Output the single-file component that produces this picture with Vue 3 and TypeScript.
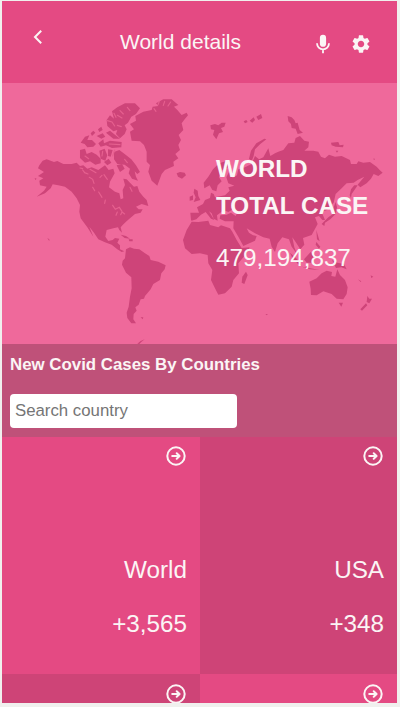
<script setup lang="ts">
import { ref, computed } from 'vue'

interface Country {
  id: number
  name?: string
  cases?: number
}

interface Sheet {
  origin: string
  shapes: string[]
}

const worldTotal = 479194837
const query = ref('')

// Entries without a name are tiles whose figures are not loaded yet.
const countries = ref<Country[]>([
  { id: 1, name: 'World', cases: 3565 },
  { id: 2, name: 'USA', cases: 348 },
  { id: 3 },
  { id: 4 },
])

const visible = computed(() =>
  countries.value.filter((c) =>
    (c.name ?? '').toLowerCase().includes(query.value.toLowerCase()),
  ),
)

const format = (n: number): string => n.toLocaleString('en-US')

// Land outlines, grouped by the corner each set is measured from.
const sheets: Sheet[] = [
  {
    origin: 'translate(30 90) scale(0.3333)',
    shapes: [
      // North America
      'M28 226L38 212 50 208 72 216 82 213 100 222 125 222 140 218 150 228 160 226 172 236 185 232 205 240 225 226 236 240 250 236 254 250 240 275 237 292 255 305 268 310 272 328 280 325 278 300 285 285 280 266 290 268 300 278 312 290 322 288 328 305 340 320 350 330 355 348 335 342 318 350 326 358 338 358 332 368 315 372 300 385 288 395 278 405 272 412 276 428 268 420 264 412 250 415 230 420 226 440 235 453 248 450 255 444 268 446 262 458 270 466 270 478 283 484 275 486 262 478 245 464 225 457 205 448 192 428 178 410 186 430 190 440 172 412 152 385 148 365 150 345 140 325 125 305 105 290 85 286 68 283 62 295 45 310 20 320 42 302 50 290 30 286 28 272 40 265 24 258 42 246 24 235Z',
      // Greenland
      'M300 125L312 118 300 102 318 92 316 78 340 65 365 60 368 50 385 48 378 40 400 28 425 28 445 45 432 50 442 60 455 75 470 68 474 76 464 88 455 100 460 120 446 135 453 150 445 165 450 180 436 192 445 205 430 215 432 228 405 240 395 252 382 287 365 272 355 245 360 225 350 215 350 185 342 165 330 154 305 152Z',
      // Ellesmere and the Arctic archipelago
      'M246 64L262 52 285 40 315 40 330 55 318 72 304 80 294 98 284 106 290 118 284 132 270 145 258 132 262 120 250 124 232 108 230 90 240 76 252 86Z',
      'M150 180L165 176 170 192 185 186 200 194 212 206 212 220 196 224 180 214 165 218 150 204Z',
      'M152 158L165 140 178 136 172 150 186 150 198 162 190 170 172 172 164 162Z',
      'M205 160L220 148 222 160 240 152 275 156 274 172 246 174 228 166 212 170Z',
      'M182 130L190 122 196 128 186 138ZM204 118L214 110 218 120 208 126ZM200 138L218 130 226 140 214 146ZM228 128L240 122 252 132 270 146 250 146Z',
      'M208 182L224 176 232 196 226 212 212 206ZM234 178L248 180 242 200 234 198ZM222 216L236 206 244 218 232 226Z',
      'M252 186L268 180 284 192 304 208 318 226 330 246 322 252 314 244 318 260 324 272 306 266 296 250 300 236 284 224 262 222 252 208Z',
      'M260 226L276 222 284 236 270 246Z',
      // Iceland, Caribbean
      'M440 250L450 246 464 248 468 256 456 266 444 260Z',
      'M272 434L288 438 300 446 284 444ZM296 448L308 448 308 454 298 454ZM14 264L20 266 16 270ZM52 444L58 448 58 454Z',
    ],
  },
  {
    origin: 'translate(30 210) scale(0.3333)',
    shapes: [
      // South America
      'M288 118L300 112 312 116 328 118 345 130 358 138 362 150 385 155 407 166 404 178 394 190 390 210 370 222 362 238 352 250 345 258 342 266 332 268 326 284 316 292 320 302 311 312 310 328 318 340 304 340 292 324 290 308 296 290 300 260 305 235 304 202 288 188 276 164 278 152 285 145Z',
      'M332 322L340 322 338 328ZM322 401L332 393 344 388 334 396 328 402Z',
    ],
  },
  {
    origin: 'translate(175 120) scale(0.3333)',
    shapes: [
      // Africa and Madagascar
      'M50 305L70 306 100 302 105 315 130 322 138 316 165 325 172 335 185 360 200 384 224 382 215 400 190 430 192 460 175 480 170 500 150 520 130 524 120 505 108 480 112 450 100 430 98 405 75 400 50 402 30 385 24 360 35 330Z',
      'M213 455L218 465 208 492 200 488 202 470Z',
      // Eurasia
      'M48 300L46 278 72 278 66 262 84 252 90 240 105 234 108 218 116 222 120 232 150 226 164 212 160 202 178 197 160 190 154 172 165 150 178 160 172 174 186 166 190 148 210 142 230 132 240 108 252 118 265 112 280 85 286 108 300 100 310 95 325 90 340 70 358 68 362 54 375 48 388 62 402 65 400 82 388 92 415 92 430 95 438 110 450 115 462 104 480 110 500 108 525 120 528 132 545 132 550 124 565 128 585 126 605 140 614 150 623 158 610 168 596 162 588 176 575 190 556 202 548 194 558 182 568 170 548 180 536 188 515 190 500 205 482 222 476 248 456 270 440 276 450 300 442 300 432 288 420 292 428 312 410 345 384 354 388 374 376 388 362 366 352 352 358 382 366 402 350 380 342 358 322 352 308 370 300 396 290 380 284 356 265 352 240 340 215 325 222 338 234 346 245 348 240 362 205 378 190 350 175 325 176 304 150 304 134 296 136 286 155 284 168 278 182 288 186 280 174 268 160 276 145 270 136 278 126 286 128 302 116 296 110 280 102 274 118 300 108 296 92 276 78 284 64 298 50 302Z',
      // Scandinavia, Britain, Svalbard, Novaya Zemlya
      'M88 205L86 188 100 170 114 148 132 130 152 124 168 132 160 142 142 150 132 172 140 184 128 196 124 214 112 210 104 196Z',
      'M58 206L68 212 70 228 76 240 56 246 62 232 56 218ZM44 230L54 226 54 240 44 242Z',
      'M106 16L120 12 130 16 140 8 152 8 148 20 138 24 144 36 132 40 124 58 114 44 118 30 108 28Z',
      'M222 116L228 92 244 70 268 56 274 58 256 72 240 88 236 108 230 124Z',
      'M206 4L214 0 218 6 210 10ZM224 2L236 -8 240 0 232 8ZM244 -10L258 -18 262 -6 250 0Z',
      'M338 -12L350 -8 358 0 362 10 368 8 374 30 384 38 368 42 362 26 350 24 348 12 340 4Z',
      'M468 68L490 66 494 76 506 74 504 82 482 80 470 76ZM482 92L490 92 486 98ZM594 116L600 116 598 120Z',
      // Sakhalin, Kamchatka, Japan, Philippines
      'M548 196L540 208 530 222 528 234 524 226 528 208 538 196Z',
      'M482 246L486 262 482 282 466 298 450 308 448 318 440 312 460 292 474 282 476 262Z',
      'M424 330L430 350 434 364 426 358ZM424 366L436 380 432 386 422 374Z',
    ],
  },
  {
    origin: 'translate(200 210) scale(0.3333)',
    shapes: [
      // Australia, Tasmania, New Zealand, Indonesia
      'M328 215L350 205 365 190 380 182 396 186 394 198 406 200 412 178 420 195 435 210 443 232 440 252 430 268 410 266 395 252 370 244 350 256 333 255 332 236Z',
      'M416 278L429 278 424 290Z',
      'M502 258L508 266 516 266 508 280 500 276ZM498 280L502 286 486 302 481 298Z',
      'M396 150L412 158 432 162 440 178 424 172 408 174ZM312 148L332 126 340 136 334 158 320 158ZM270 128L290 146 304 166 294 162 276 142ZM306 170L340 176 358 180 330 178Z',
      'M474 208L484 214 482 216ZM512 196L520 200 514 204ZM196 312L203 312 201 316Z',
    ],
  },
]

// Lakes, straits and bays that cut into the land.
const waters: string[] = [
  'M158 240L164 248 174 252M178 262L188 268 192 280M188 292L194 302M206 306L216 322M248 346L256 358 268 352 276 364M262 366L258 376M272 374L276 366 284 372M180 238L198 248M222 254L232 268M150 234L158 236M300 292L306 304M216 256L210 262M226 330L224 340',
  'M254 180L248 198M232 92L246 96 254 108M270 62L280 72M262 76L276 84M252 70L258 82M274 110L262 106M292 52L300 62M388 34L384 44M404 34L400 46M422 36L414 48M372 56L378 64M218 184L216 198M165 198L176 206M238 162L270 164M284 208L292 218',
]
</script>

<template>
  <main class="phone">
    <header class="bar">
      <button class="icon-btn" aria-label="Back">
        <svg viewBox="0 0 10 16" width="10" height="16">
          <path d="M8.200 1.800 2 8l6.200 6.200" class="line" />
        </svg>
      </button>
      <h1 class="title">World details</h1>
      <div class="actions">
        <svg viewBox="0 0 14 20" width="14" height="20">
          <rect x="3.900" y="0.800" width="6.200" height="12" rx="3.100" fill="currentColor" />
          <path d="M1 9.300a6 6 0 0 0 12 0M7 15.300V19.300" class="line thin" />
        </svg>
        <svg viewBox="2 2 20 20" width="18" height="18">
          <path
            fill="currentColor"
            d="M19.140 12.940c.040-.300.060-.610.060-.940 0-.320-.020-.640-.070-.940l2.030-1.580a.49.49 0 0 0 .120-.610l-1.920-3.320a.488.488 0 0 0-.590-.220l-2.390.960c-.500-.380-1.030-.700-1.620-.940l-.360-2.540a.484.484 0 0 0-.480-.410h-3.840c-.240 0-.430.170-.470.410l-.360 2.540c-.590.240-1.130.570-1.620.940l-2.390-.960c-.220-.080-.470 0-.590.220L2.740 8.870c-.120.210-.080.470.120.610l2.030 1.580c-.050.300-.090.630-.090.940s.020.640.070.940l-2.030 1.580a.49.49 0 0 0-.120.610l1.920 3.320c.120.220.370.290.590.220l2.390-.960c.500.380 1.030.700 1.620.940l.360 2.540c.050.240.240.410.480.410h3.840c.240 0 .440-.170.470-.410l.360-2.540c.590-.240 1.130-.560 1.620-.940l2.390.960c.220.080.470 0 .590-.220l1.920-3.320c.120-.220.070-.470-.120-.610l-2.010-1.580zM12 15.600c-1.980 0-3.600-1.620-3.600-3.600s1.620-3.600 3.600-3.600 3.600 1.620 3.600 3.600-1.620 3.600-3.600 3.600z"
          />
        </svg>
      </div>
    </header>

    <section class="hero">
      <svg class="map" viewBox="2 83 395 261" aria-hidden="true">
        <g v-for="(sheet, i) in sheets" :key="i" :transform="sheet.origin">
          <path v-for="(d, j) in sheet.shapes" :key="j" :d="d" class="land" />
        </g>
        <g transform="translate(30 90) scale(0.3333)">
          <path v-for="(d, i) in waters" :key="i" :d="d" class="water" />
        </g>
      </svg>
      <div class="summary">
        <h2>WORLD<br />TOTAL CASE</h2>
        <p>{{ format(worldTotal) }}</p>
      </div>
    </section>

    <section class="search">
      <h3>New Covid Cases By Countries</h3>
      <input v-model="query" type="text" placeholder="Search country" />
    </section>

    <ul class="grid">
      <li v-for="c in visible" :key="c.id" class="cell">
        <svg class="go" viewBox="0 0 24 24" width="24" height="24">
          <circle cx="12" cy="12" r="8.700" class="line ring" />
          <path d="M8.200 12h7M12.700 9.300l2.900 2.700-2.900 2.700" class="line ring" />
        </svg>
        <span v-if="c.name" class="name">{{ c.name }}</span>
        <span v-if="c.cases !== undefined" class="cases">+{{ format(c.cases) }}</span>
      </li>
    </ul>
  </main>
</template>

<style>
body {
  background: #f0f0ee;
}
</style>

<style scoped>
.phone {
  box-sizing: border-box;
  width: 395px;
  height: 702px;
  margin: 1px 3px 4px 2px;
  overflow: hidden;
  display: flex;
  flex-direction: column;
  background: #e44a83;
  color: #fbf5f5;
  font-family: 'Liberation Sans', Arial, sans-serif;
}

h1,
h2,
h3,
p,
ul {
  margin: 0;
  padding: 0;
}

.line {
  fill: none;
  stroke: currentColor;
  stroke-width: 2;
}

.thin {
  stroke-width: 1.800;
}

.ring {
  stroke-width: 2;
  stroke-linecap: round;
  stroke-linejoin: round;
}

.bar {
  flex: none;
  height: 82px;
  display: grid;
  grid-template-columns: 118px 1fr auto;
  align-items: center;
  box-sizing: border-box;
  padding-right: 27px;
}

.icon-btn {
  justify-self: start;
  display: flex;
  padding: 0;
  margin: 0 0 10px 31px;
  border: 0;
  background: none;
  color: inherit;
}

.title {
  font-size: 21px;
  font-weight: 400;
  line-height: 24px;
}

.actions {
  display: flex;
  align-items: center;
  gap: 22px;
  padding-top: 4px;
}

.hero {
  flex: none;
  height: 261px;
  display: grid;
  background: #ef699b;
}

.map,
.summary {
  grid-area: 1 / 1;
}

.map {
  display: block;
  width: 395px;
  height: 261px;
}

.land {
  fill: #ce4479;
}

.water {
  fill: none;
  stroke: #e6608f;
  stroke-width: 3.500;
  stroke-linecap: round;
}

.summary {
  padding: 67px 0 0 214px;
  font-size: 24.250px;
  z-index: 1;
}

.summary h2 {
  font-size: 24.250px;
  line-height: 37px;
}

.summary p {
  margin-top: 20px;
  line-height: 28px;
}

.search {
  flex: none;
  box-sizing: border-box;
  height: 93px;
  padding: 11px 8px 0;
  display: flex;
  flex-direction: column;
  align-items: flex-start;
  gap: 20px;
  background: #bf5179;
}

.search h3 {
  font-size: 16.200px;
  line-height: 19px;
  transform: scaleX(1.040);
  transform-origin: left;
}

.search input {
  box-sizing: border-box;
  width: 227px;
  height: 34px;
  padding: 0 5px;
  border: 0;
  border-radius: 4px;
  background: #fff;
  font: 16.800px 'Liberation Sans', Arial, sans-serif;
}

.search h3 {
  font-size: 16.850px;
  transform: none;
}

.search input::placeholder {
  color: #757575;
}

.grid {
  display: grid;
  grid-template-columns: 198px 197px;
  grid-auto-rows: 237px;
  list-style: none;
}

.cell {
  display: flex;
  flex-direction: column;
  align-items: flex-end;
  padding: 7px 13px 0 0;
  font-size: 24.250px;
  line-height: 28px;
}

.cell:nth-child(4n + 2),
.cell:nth-child(4n + 3) {
  background: #ce4477;
}

.cell:nth-child(n + 3) {
  padding-top: 8px;
}

.go {
  flex: none;
  margin-right: -1px;
}

.name {
  margin-top: 88px;
}

.cases {
  margin-top: 26px;
}
</style>
